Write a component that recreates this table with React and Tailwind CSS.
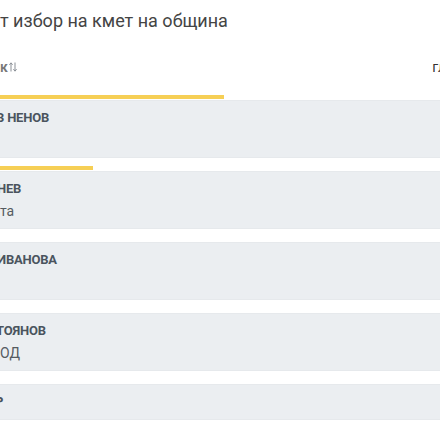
const rows = [
  { name: "В НЕНОВ", party: "\u00a0", bar: 224, shift: "-ml-[4px]" },
  { name: "НЕВ", party: "та", bar: 93, shift: "-ml-[3px]" },
  { name: "ИВАНОВА", party: "\u00a0", bar: 0, shift: "-ml-[3px]" },
  { name: "ТОЯНОВ", party: "ОД", bar: 0, shift: "-ml-[4px]" },
  { name: "Р", party: null, bar: 0, shift: "-ml-[5px]" },
];

const SortIcon = () => (
  <svg width="8" height="10" viewBox="0 0 8 10" className="ml-[1px]">
    {/* up arrow */}
    <path d="M2 9.5V1M0.4 2.8L2 0.8L3.6 2.8" stroke="#8a8f96" strokeWidth="1" fill="none" />
    {/* down arrow */}
    <path d="M6 0.5V9M4.4 7.2L6 9.2L7.6 7.2" stroke="#8a8f96" strokeWidth="1" fill="none" />
  </svg>
);

export default function App() {
  return (
    <div className="w-[440px] h-[440px] overflow-hidden bg-white font-['Roboto',sans-serif]">
      {/* Title */}
      <h1 className="pt-[7px] text-[18px] leading-[28px] text-[#444] font-normal whitespace-nowrap">
        т избор на кмет на община
      </h1>

      {/* Column headers */}
      <div className="mt-[22px] h-[20px] flex justify-between items-center text-[14px] leading-[20px]">
        <div className="flex items-center">
          <span className="font-semibold text-[#777]">к</span>
          <SortIcon />
        </div>
        <span className="text-[#333] -mr-[6px]">гл</span>
      </div>

      {/* Candidates */}
      <div className="mt-[10px]">
        {rows.map((r, i) => (
          <div key={i} className="pt-2">
            <div className="h-1 mb-px">
              {r.bar > 0 && (
                <div className="h-1 bg-[#f6cf55]" style={{ width: r.bar }} />
              )}
            </div>
            <div className="bg-[#ebeef1] border-y border-[#e6e9ec] py-[7px]">
              <div className={`text-[13px] leading-[20px] font-bold tracking-[-0.2px] text-[#4a545e] whitespace-nowrap ${r.shift}`}>
                {r.name}
              </div>
              {r.party !== null && (
                <div className="mt-[2px] text-[14px] leading-[20px] text-[#555b61] whitespace-nowrap">
                  {r.party}
                </div>
              )}
            </div>
          </div>
        ))}
      </div>
    </div>
  );
}
